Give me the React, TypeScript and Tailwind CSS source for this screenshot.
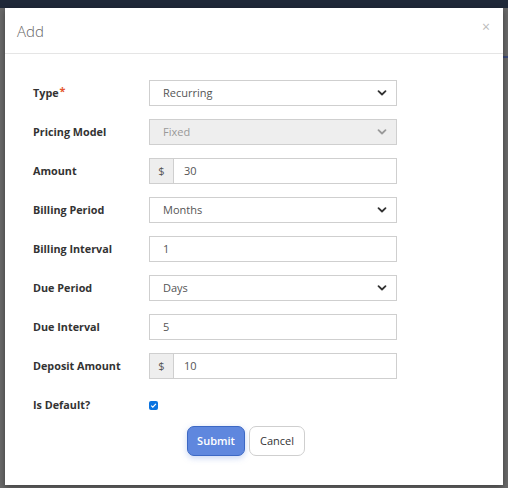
import React from "react";

const Chevron = ({ light }: { light?: boolean }) => (
  <svg width="10" height="7" viewBox="0 0 10 7" className="absolute right-[9px] top-1/2 -translate-y-1/2">
    <path d="M1.5 1.6 L5 5 L8.5 1.6" fill="none" stroke={light ? "#9a9a9a" : "#333"} strokeWidth="1.8" strokeLinecap="round" strokeLinejoin="round" />
  </svg>
);

const Label = ({ children, req }: { children: React.ReactNode; req?: boolean }) => (
  <div className="w-[116px] shrink-0 text-[10.8px] font-bold text-[#333]">
    {children}
    {req && <span className="text-[#e4572e] ml-[1px] relative -top-[2px]">*</span>}
  </div>
);

const Select = ({ value, disabled }: { value: string; disabled?: boolean }) => (
  <div className={`relative w-[248px] h-[26px] border border-[#cfcfcf] flex items-center pl-[13px] text-[11px] ${disabled ? "bg-[#eeeeee] text-[#999]" : "bg-white text-[#555]"}`}>
    {value}
    <Chevron light={disabled} />
  </div>
);

const Input = ({ value }: { value: string }) => (
  <div className="w-[248px] h-[26px] border border-[#cfcfcf] bg-white flex items-center pl-[13px] text-[11px] text-[#555]">{value}</div>
);

const Money = ({ value }: { value: string }) => (
  <div className="w-[248px] h-[26px] border border-[#cfcfcf] bg-white flex text-[11px] text-[#555]">
    <div className="w-[24px] bg-[#eeeeee] border-r border-[#cfcfcf] flex items-center justify-center">$</div>
    <div className="flex items-center pl-[10px]">{value}</div>
  </div>
);

const Row = ({ label, req, children }: { label: string; req?: boolean; children: React.ReactNode }) => (
  <div className="flex items-center h-[26px]">
    <Label req={req}>{label}</Label>
    {children}
  </div>
);

export default function App() {
  return (
    <div className="w-[508px] h-[488px] bg-[#696969] relative overflow-hidden" style={{ fontFamily: '"Open Sans", sans-serif' }}>
      <div className="absolute left-0 top-0 w-full h-[8px] bg-[#1f2838]" />
      <div className="absolute right-0 top-[56px] w-[10px] h-[2px] bg-[#3b4a7a]" />
      <div className="absolute left-[5px] top-[8px] w-[498px] h-[477px] bg-white shadow-[0_2px_6px_rgba(0,0,0,0.4)]">
        <div className="h-[46px] border-b border-[#e5e5e5] flex items-center justify-between pl-[12px] pr-[13px]">
          <div className="text-[15px] font-light text-[#666] pt-[1px]">Add</div>
          <div className="text-[14px] text-[#bbb] leading-none -mt-[8px]">×</div>
        </div>
        <div className="pl-[28px] pt-[26px] flex flex-col gap-[13px]">
          <Row label="Type" req><Select value="Recurring" /></Row>
          <Row label="Pricing Model"><Select value="Fixed" disabled /></Row>
          <Row label="Amount"><Money value="30" /></Row>
          <Row label="Billing Period"><Select value="Months" /></Row>
          <Row label="Billing Interval"><Input value="1" /></Row>
          <Row label="Due Period"><Select value="Days" /></Row>
          <Row label="Due Interval"><Input value="5" /></Row>
          <Row label="Deposit Amount"><Money value="10" /></Row>
          <Row label="Is Default?">
            <div className="w-[9px] h-[9px] rounded-[2px] bg-[#0b74e0] flex items-center justify-center">
              <svg width="7" height="7" viewBox="0 0 7 7">
                <path d="M1.2 3.6 L2.8 5.1 L5.9 1.8" fill="none" stroke="white" strokeWidth="1.2" />
              </svg>
            </div>
          </Row>
        </div>
        <div className="flex gap-[4px] pl-[182px] mt-[8px]">
          <button className="w-[58px] h-[30px] rounded-[7px] bg-[#5f87de] border border-[#3c68c4] text-white text-[11px] font-semibold shadow-[0_2px_6px_rgba(95,135,222,0.35)]">Submit</button>
          <button className="w-[56px] h-[30px] rounded-[7px] bg-white border border-[#cfcfcf] text-[#333] text-[11px]">Cancel</button>
        </div>
      </div>
    </div>
  );
}
